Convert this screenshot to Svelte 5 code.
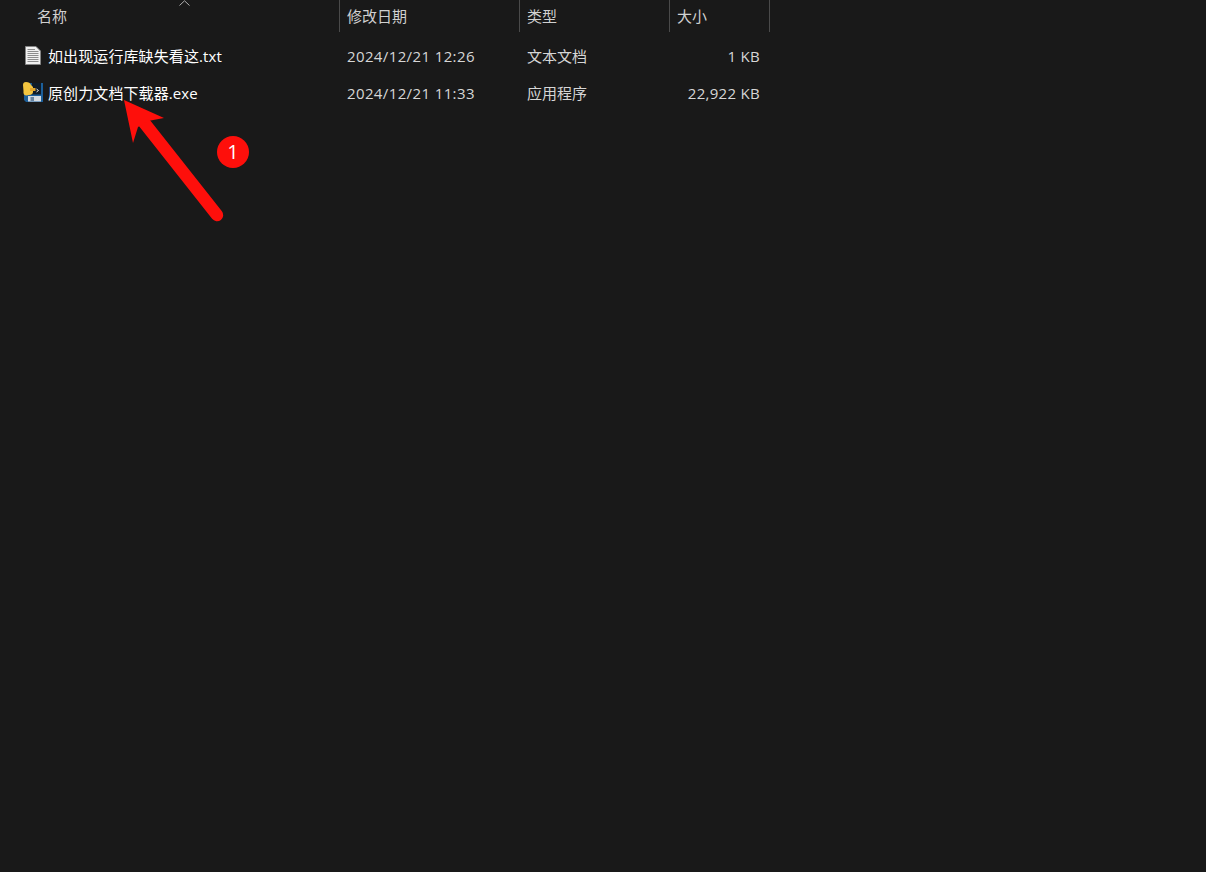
<script>
  const columns = [
    { label: '名称', cls: 'name' },
    { label: '修改日期', cls: 'date' },
    { label: '类型', cls: 'type' },
    { label: '大小', cls: 'size' }
  ];
  const files = [
    { name: '如出现运行库缺失看这.txt', date: '2024/12/21 12:26', type: '文本文档', size: '1 KB', icon: 'txt' },
    { name: '原创力文档下载器.exe', date: '2024/12/21 11:33', type: '应用程序', size: '22,922 KB', icon: 'exe' }
  ];
</script>

<main class="explorer">
  <header class="head">
    {#each columns as c}
      <div class="hcell {c.cls}">{c.label}</div>
    {/each}
    <svg class="sort" width="11" height="6" viewBox="0 0 11 6"><path d="M0.5 5.5 L5.5 0.8 L10.5 5.5" fill="none" stroke="#b0b0b0" stroke-width="1"/></svg>
  </header>

  <div class="rows">
    {#each files as f}
      <div class="row">
        <div class="namecell">
          {#if f.icon === 'txt'}
            <svg class="icon txt" width="20" height="20" viewBox="0 0 20 20">
              <path d="M2.5 0.5 H13 L17.5 5 V18.5 H2.5 Z" fill="#f0f0f0" stroke="#858585"/>
              <path d="M4.5 3.5 H12 M4.5 5.5 H15.5 M4.5 7.5 H15.5 M4.5 9.5 H15.5 M4.5 11.5 H15.5 M4.5 13.5 H15.5 M4.5 15.5 H15.5" stroke="#8c8c8c" stroke-width="1"/>
            </svg>
          {:else}
            <svg class="icon exe" width="20" height="21" viewBox="0 0 20 21">
              <path d="M1 1 H20 V20 H3 L1 18 Z" fill="#1c5f9a"/>
              <path d="M9 1 H18 V12.5 H8 Z" fill="#101c28"/>
              <path d="M5 14 H18 V19.5 H5 Z" fill="#d5dbe1"/>
              <path d="M7.5 15 H11 V19 H7.5 Z" fill="#66839f"/>
              <path d="M13.5 7 L15.5 8.5 L13.5 10" fill="none" stroke="#e8e8e8" stroke-width="1"/>
              <path d="M0 3 Q0 0 3 0 Q7 0 8 3 L10 5 V10 Q10 12.5 6 13 L3 13.5 Q0 13 0.5 9 Z" fill="#f4c53f"/>
              <path d="M7 6 H12.5 V9 H7 Z" fill="#e3a72c"/>
            </svg>
          {/if}
          <span class="fname">{f.name}</span>
        </div>
        <div class="cell date">{f.date}</div>
        <div class="cell type">{f.type}</div>
        <div class="cell size">{f.size}</div>
      </div>
    {/each}
  </div>

  <svg class="arrow" width="1206" height="872" viewBox="0 0 1206 872">
    <path d="M217 215 L142 120" stroke="#fe0f0b" stroke-width="12.5" stroke-linecap="round" fill="none"/>
    <path d="M124 100 L164 118 L148 121 L138 127 L133 143 Z" fill="#fe0f0b"/>
  </svg>
  <div class="badge">1</div>
</main>

<style>
  :global(body) {
    margin: 0;
    background: #191919;
  }
  .explorer {
    position: relative;
    width: 1206px;
    height: 872px;
    overflow: hidden;
    background: #191919;
    color: #fff;
    font-family: "Open Sans", "Noto Sans CJK SC", sans-serif;
    font-size: 15px;
    line-height: 22px;
  }
  .head {
    position: relative;
    display: grid;
    grid-template-columns: 340px 180px 150px 100px;
    height: 32px;
  }
  .hcell {
    display: flex;
    align-items: center;
    box-sizing: border-box;
    padding: 0 0 1px 7px;
    color: #d0d0d0;
    border-right: 1px solid #4a4a4a;
  }
  .hcell.name {
    padding-left: 37px;
  }
  .sort {
    position: absolute;
    left: 179px;
    top: 0;
  }
  .rows {
    display: flex;
    flex-direction: column;
    padding-top: 5px;
  }
  .row {
    display: grid;
    grid-template-columns: 340px 180px 150px 100px;
    height: 37px;
    align-items: center;
  }
  .namecell {
    display: flex;
    align-items: center;
    padding-left: 23px;
    position: relative;
  }
  .icon {
    flex: none;
    width: 20px;
    margin-right: 5px;
  }
  .txt {
    margin-top: 1px;
  }
  .fname {
    color: #fff;
    white-space: nowrap;
    letter-spacing: 0.1px;
  }
  .cell {
    padding-left: 7px;
    color: #d6d6d6;
    white-space: nowrap;
  }
  .cell.date {
    letter-spacing: 0.38px;
  }
  .cell.size {
    padding: 0 10px 0 0;
    text-align: right;
    letter-spacing: 0.3px;
  }
  .arrow {
    position: absolute;
    left: 0;
    top: 0;
    pointer-events: none;
  }
  .badge {
    position: absolute;
    left: 217px;
    top: 136px;
    width: 32px;
    height: 32px;
    border-radius: 50%;
    background: #fe0f0b;
    color: #fff;
    font-size: 20px;
    line-height: 32px;
    text-align: center;
  }
</style>
